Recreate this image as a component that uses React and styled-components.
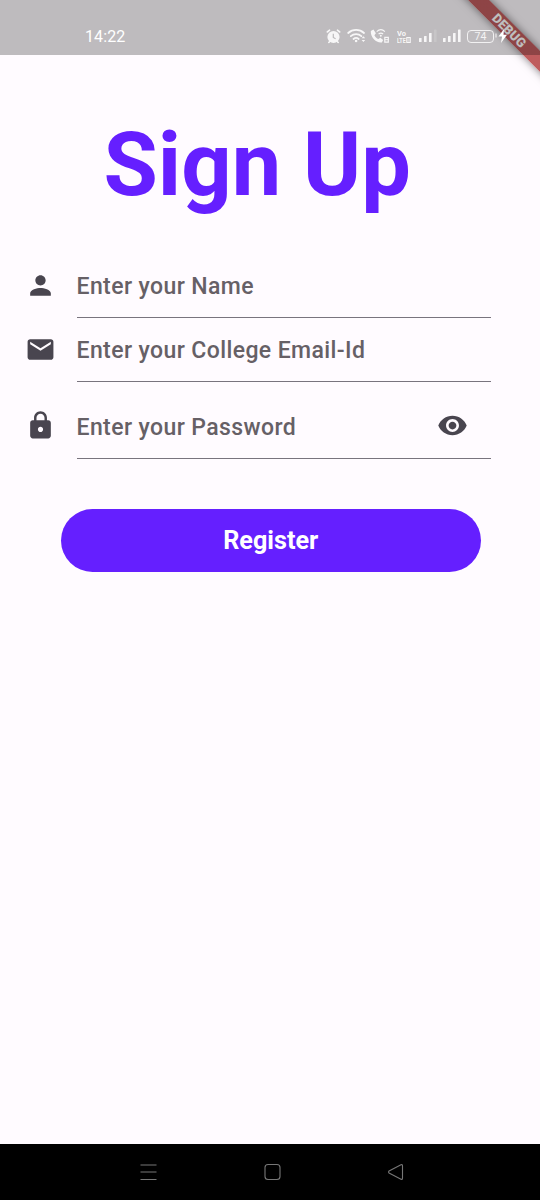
import React from "react";
import styled, { createGlobalStyle } from "styled-components";

const Global = createGlobalStyle`
  *, *::before, *::after { box-sizing: border-box; }
  body { margin: 0; background: #fffbff; font-family: Roboto, "Liberation Sans", sans-serif; }
`;

const Screen = styled.div`
  position: relative;
  display: flex;
  flex-direction: column;
  width: 540px;
  height: 1200px;
  overflow: hidden;
  background: #fffbff;
`;

const StatusBar = styled.header`
  position: relative;
  z-index: 2;
  display: flex;
  align-items: center;
  height: 55px;
  padding: 17px 31px 0 85px;
  background: rgba(0, 0, 0, 0.255);
  color: #fff;
`;

const Clock = styled.time`
  flex: 1;
  padding-top: 2px;
  font-size: 16px;
  line-height: 20px;
  letter-spacing: 0.1px;
`;

const StatusIcon = styled.svg`
  flex: none;
  display: block;
  width: ${(p) => p.$w}px;
  height: 20px;
  margin-left: ${(p) => p.$gap || 0}px;
  fill: #fff;
  opacity: ${(p) => p.$opacity || 0.88};
`;

const VoLte = styled.span`
  display: flex;
  flex-direction: column;
  align-items: flex-start;
  width: 15px;
  margin-left: 7px;
  padding-top: 1px;
  font-size: 7.5px;
  font-weight: 700;
  line-height: 7px;
  white-space: nowrap;
  opacity: 0.9;
`;

const Squeezed = styled.span`
  display: flex;
  flex: none;
  align-items: center;
  transform: scaleX(${(p) => p.$x});
  transform-origin: left;
`;

const SimBadge = styled.i`
  flex: none;
  width: 6px;
  height: 6px;
  margin-left: 1px;
  border: 1.5px solid #fff;
  background: rgba(255, 255, 255, 0.4);
`;

const Battery = styled.span`
  display: flex;
  align-items: center;
  justify-content: center;
  width: 27px;
  height: 13px;
  margin-left: 6px;
  border: 1px solid rgba(255, 255, 255, 0.8);
  border-radius: 4px;
  color: rgba(255, 255, 255, 0.85);
  font-size: 10.5px;
  line-height: 11px;
`;

const Ribbon = styled.div`
  position: absolute;
  z-index: 1;
  top: 22.5px;
  left: 409px;
  width: 200px;
  height: 15.4px;
  transform: rotate(45deg);
  background:
    linear-gradient(rgba(183, 28, 28, 0.627), rgba(183, 28, 28, 0.627)),
    rgba(0, 0, 0, 0.2);
  box-shadow: 0 0 9px rgba(0, 0, 0, 0.5);
  color: #fff;
  font-size: 13px;
  font-weight: 900;
  line-height: 15.4px;
  text-align: center;
`;

const Page = styled.main`
  flex: 1;
  display: flex;
  flex-direction: column;
`;

const Title = styled.h1`
  margin: 59px 0 0 103.5px;
  color: #651fff;
  font-size: 88.3px;
  font-weight: 700;
  line-height: 102px;
  white-space: nowrap;
`;

const Form = styled.form`
  display: flex;
  flex-direction: column;
  padding: 38px 49px 0 25px;
`;

const FieldRow = styled.label`
  display: flex;
  height: 64px;
  margin-top: ${(p) => p.$gap || 0}px;
`;

const LeadIcon = styled.svg`
  flex: none;
  width: 31px;
  height: 31px;
  margin: ${(p) => p.$top}px 20.5px 0 0;
  fill: #49454f;
`;

const FieldBox = styled.span`
  flex: 1;
  display: flex;
  align-items: center;
  justify-content: space-between;
  padding-right: 23px;
  border-bottom: 1px solid #79747e;
`;

const Hint = styled.span`
  padding-top: 2px;
  color: #666066;
  font-size: 23px;
  font-weight: 500;
  letter-spacing: 0.4px;
  white-space: nowrap;
`;

const TrailIcon = styled.svg`
  width: 31px;
  height: 31px;
  margin-bottom: 2px;
  fill: #49454f;
`;

const RegisterButton = styled.button`
  align-self: flex-start;
  width: 420.5px;
  height: 63px;
  margin: 50px 0 0 35.5px;
  padding: 1px 0 0;
  border: 0;
  border-radius: 32px;
  background: #651fff;
  color: #fff;
  font: 700 25.2px/62px Roboto, sans-serif;
`;

const NavBar = styled.nav`
  display: flex;
  align-items: center;
  height: 56px;
  padding-left: 139px;
  gap: 106px;
  background: #000;
`;

const NavIcon = styled.svg`
  flex: none;
  width: 18px;
  height: 18px;
  fill: none;
  stroke: #777;
  stroke-width: 1.1;
  stroke-linejoin: round;
`;

const PERSON = "M12 12c2.21 0 4-1.79 4-4s-1.79-4-4-4-4 1.79-4 4 1.79 4 4 4zm0 2c-2.67 0-8 1.34-8 4v2h16v-2c0-2.66-5.33-4-8-4z";
const MAIL = "M20 4H4c-1.1 0-1.99.9-1.99 2L2 18c0 1.1.9 2 2 2h16c1.1 0 2-.9 2-2V6c0-1.1-.9-2-2-2zm0 4l-8 5-8-5V6l8 5 8-5v2z";
const LOCK = "M18 8h-1V6c0-2.76-2.24-5-5-5S7 3.24 7 6v2H6c-1.1 0-2 .9-2 2v10c0 1.1.9 2 2 2h12c1.1 0 2-.9 2-2V10c0-1.1-.9-2-2-2zm-6 9c-1.1 0-2-.9-2-2s.9-2 2-2 2 .9 2 2-.9 2-2 2zm3.1-9H8.9V6c0-1.71 1.39-3.1 3.1-3.1 1.71 0 3.1 1.39 3.1 3.1v2z";
const EYE = "M12 4.5C7 4.5 2.73 7.61 1 12c1.73 4.39 6 7.5 11 7.5s9.27-3.11 11-7.5c-1.73-4.39-6-7.5-11-7.5zM12 17c-2.76 0-5-2.24-5-5s2.24-5 5-5 5 2.24 5 5-2.24 5-5 5zm0-8c-1.66 0-3 1.34-3 3s1.34 3 3 3 3-1.34 3-3-1.34-3-3-3z";

function Field({ icon, hint, gap, trailing, iconTop = 16 }) {
  return (
    <FieldRow $gap={gap}>
      <LeadIcon $top={iconTop} viewBox="0 0 24 24"><path d={icon} /></LeadIcon>
      <FieldBox>
        <Hint>{hint}</Hint>
        {trailing && <TrailIcon viewBox="0 0 24 24"><path d={trailing} /></TrailIcon>}
      </FieldBox>
    </FieldRow>
  );
}

function Signal({ gap, weak, w }) {
  return (
    <StatusIcon $w={w} $gap={gap} viewBox={`0 0 ${w} 20`}>
      <rect x="0" y="12" width="2.6" height="4" rx=".5" />
      <rect x="5" y="10" width="2.6" height="6" rx=".5" />
      <rect x="10" y="7" width="2.6" height="9" rx=".5" />
      <rect x="15" y="3.5" width="2.6" height="12.5" rx=".5" opacity={weak ? 0.18 : 1} />
    </StatusIcon>
  );
}

export default function App() {
  return (
    <Screen>
      <Global />
      <StatusBar>
        <Clock>14:22</Clock>
        <StatusIcon $w={15} viewBox="0 0 15 20">
          <circle cx="7.5" cy="11" r="6.1" />
          <path d="M1.3 6 3.6 4.2M13.7 6 11.4 4.2M3.5 15.7 2.8 16.5M11.5 15.7l.7.8" stroke="#fff" strokeWidth="1.6" fill="none" strokeLinecap="round" />
          <path d="M7.3 7.7v3.8l2.3 1.3" stroke="#bebcbe" strokeWidth="1.2" fill="none" />
        </StatusIcon>
        <StatusIcon $w={19} $gap={6} viewBox="0 0 19 20">
          <g fill="none" stroke="#fff" strokeWidth="1.8" strokeLinecap="round">
            <path d="M1.2 7c4.5-4.1 11.3-4.1 15.8 0" />
            <path d="M3.8 10.1c3-2.7 7.6-2.7 10.6 0" />
            <path d="M6.5 13c1.5-1.3 3.7-1.3 5.2 0" />
          </g>
          <circle cx="9.1" cy="15" r="1.3" />
          <path d="M14.6 12.2l1.8-2 1.8 2zM14.6 14l1.8 2 1.8-2z" />
        </StatusIcon>
        <StatusIcon $w={20} $gap={4} viewBox="0 0 20 20">
          <path d="M.8 5 3.4 3.5l2.5 3.7-1.5 2c.8 1.8 2.2 3 4 3.9l1.9-1.4 2.9 2.3-1.4 2.5C6.3 17.3.3 11.3.8 5z" />
          <path d="M6.7 5.6c2.5-2.3 5.8-2.3 8.2 0M8.6 8c1.4-1.2 3.1-1.2 4.5 0" stroke="#fff" strokeWidth="1.2" fill="none" />
          <circle cx="10.8" cy="9.7" r="1" />
          <path d="M14.8 11.3h3.5v4.9h-3.5z" fill="none" stroke="#fff" strokeWidth="1.2" />
          <path d="M14.8 13.7h3.5" stroke="#fff" />
        </StatusIcon>
        <VoLte>
          <Squeezed $x={1}>Vo</Squeezed>
          <Squeezed $x={0.72}>LTE<SimBadge /></Squeezed>
        </VoLte>
        <Signal w={18} gap={7} weak />
        <Signal w={18} gap={6} />
        <Battery>74</Battery>
        <StatusIcon $w={14} $gap={1} $opacity={1} viewBox="0 0 14 20">
          <path d="M1 7.5v4" stroke="#fff" strokeWidth="1.3" opacity=".7" />
          <path d="M9 3 3.5 10.5h3.5L6 17l6-8.3H8.5z" />
        </StatusIcon>
      </StatusBar>
      <Ribbon>DEBUG</Ribbon>
      <Page>
        <Title>Sign Up</Title>
        <Form>
          <Field icon={PERSON} hint="Enter your Name" />
          <Field icon={MAIL} hint="Enter your College Email-Id" />
          <Field icon={LOCK} hint="Enter your Password" gap={13} iconTop={15} trailing={EYE} />
          <RegisterButton type="button">Register</RegisterButton>
        </Form>
      </Page>
      <NavBar>
        <NavIcon viewBox="0 0 18 18"><path d="M1.5 2h16M1.5 9h16M1.5 16.5h16" /></NavIcon>
        <NavIcon viewBox="0 0 18 18"><rect x="2" y="1.5" width="15" height="15" rx="3" /></NavIcon>
        <NavIcon viewBox="0 0 18 18"><path d="M2 8q-1 1 0 2l12 6.3q1.5.5 1.5-1.3V3q0-1.8-1.5-1.3z" /></NavIcon>
      </NavBar>
    </Screen>
  );
}
